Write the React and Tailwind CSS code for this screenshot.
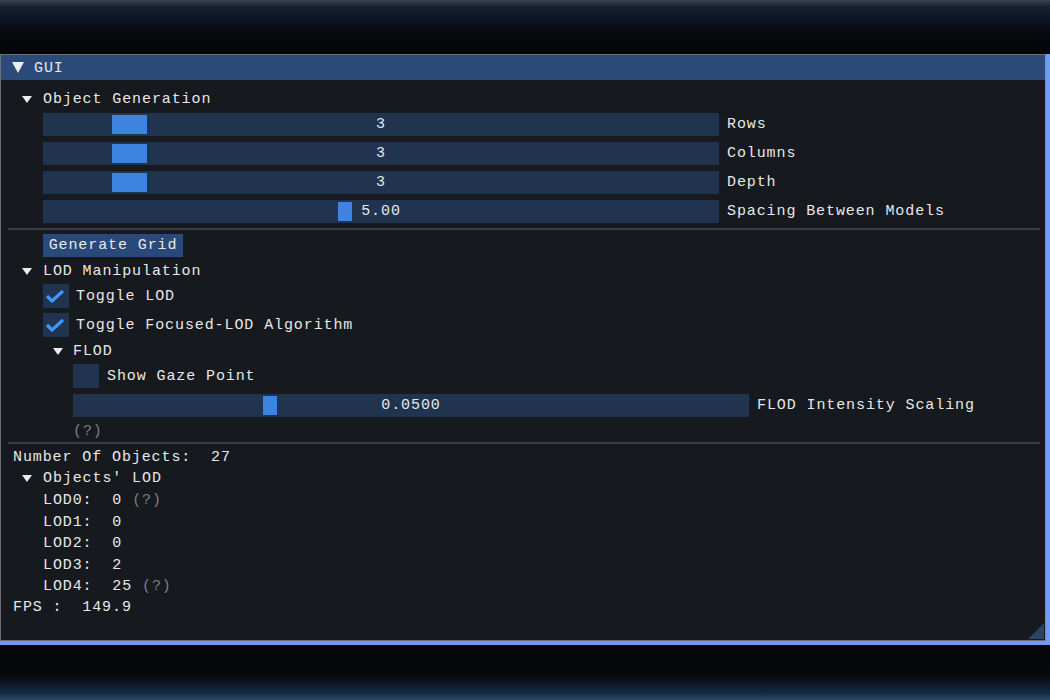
import React from "react";

const font = { fontFamily: '"Liberation Mono", "DejaVu Sans Mono", monospace' };

function Arrow({ size = "sm" }) {
  if (size === "lg") {
    return (
      <svg width="12" height="11" viewBox="0 0 12 11" className="shrink-0">
        <polygon points="0,0 12,0 6,11" fill="#ececec" />
      </svg>
    );
  }
  return (
    <svg width="10" height="7" viewBox="0 0 10 7" className="shrink-0">
      <polygon points="0,0 10,0 5,7" fill="#ececec" />
    </svg>
  );
}

function Tree({ label, arrowX, textX, mt }) {
  return (
    <div className="flex items-center h-[17px]" style={{ marginTop: mt }}>
      <div style={{ width: arrowX - 13 }} className="shrink-0" />
      <Arrow />
      <div style={{ width: textX - arrowX - 10 }} className="shrink-0" />
      <span className="whitespace-pre">{label}</span>
    </div>
  );
}

function Slider({ x, width, grabLeft, grabWidth, value, label, mt }) {
  return (
    <div className="flex items-center h-[23px]" style={{ marginTop: mt }}>
      <div style={{ width: x - 13 }} className="shrink-0" />
      <div
        className="relative h-[23px] bg-[#203450] flex items-center justify-center shrink-0"
        style={{ width }}
      >
        <div
          className="absolute top-[2px] bottom-[2px] bg-[#3d84e0]"
          style={{ left: grabLeft, width: grabWidth }}
        />
        <span className="relative whitespace-pre">{value}</span>
      </div>
      <span className="ml-[8px] whitespace-pre">{label}</span>
    </div>
  );
}

function Check({ x, checked, label, mt, labelGap = 7 }) {
  return (
    <div className="flex items-center h-[24px]" style={{ marginTop: mt }}>
      <div style={{ width: x - 13 }} className="shrink-0" />
      <div className="w-[26px] h-[24px] bg-[#203450] flex items-center justify-center shrink-0">
        {checked && (
          <svg width="20" height="14" viewBox="0 0 20 14" className="-ml-[2px]">
            <polyline
              points="2,7 7,12 18,2"
              fill="none"
              stroke="#4296fa"
              strokeWidth="3.2"
              strokeLinejoin="miter"
            />
          </svg>
        )}
      </div>
      <span className="whitespace-pre" style={{ marginLeft: labelGap }}>
        {label}
      </span>
    </div>
  );
}

function Line({ x, text, mt, extra }) {
  return (
    <div className="flex items-center h-[17px]" style={{ marginTop: mt }}>
      <div style={{ width: x - 13 }} className="shrink-0" />
      <span className="whitespace-pre">{text}</span>
      {extra && <span className="whitespace-pre text-[#7c7f86]">{extra}</span>}
    </div>
  );
}

export default function App() {
  return (
    <div
      className="w-[1050px] h-[700px] flex flex-col bg-[#050608] text-[#e8e8e8] text-[15px] tracking-[0.9px] leading-none overflow-hidden"
      style={font}
    >
      <div className="h-[54px] shrink-0 bg-[linear-gradient(to_bottom,#3a4352_0px,#1a2436_6px,#0d1726_16px,#070b12_32px,#050608_46px,#060708_54px)]" />
      <div className="h-[591px] shrink-0 flex flex-col bg-[#6d9df0] pr-[4px] pb-[4px]">
        <div className="flex-1 flex flex-col border border-[#6b6f78] border-r-[#8a8e96] bg-[#16191e] relative">
          <div className="h-[25px] bg-[#2c4a77] flex items-center shrink-0">
            <div className="w-[11px] shrink-0" />
            <Arrow size="lg" />
            <span className="ml-[10px] mt-[2px]">GUI</span>
          </div>
          <div className="flex flex-col pl-[12px]">
            <Tree label="Object Generation" arrowX={22} textX={43} mt={11} />
            <Slider x={43} width={676} grabLeft={69} grabWidth={35} value="3" label="Rows" mt={5} />
            <Slider x={43} width={676} grabLeft={69} grabWidth={35} value="3" label="Columns" mt={6} />
            <Slider x={43} width={676} grabLeft={69} grabWidth={35} value="3" label="Depth" mt={6} />
            <Slider x={43} width={676} grabLeft={295} grabWidth={14} value="5.00" label="Spacing Between Models" mt={6} />
            <div className="h-[2px] bg-[#3a3d44] mt-[5px] -ml-[5px] mr-[5px]" />
            <div className="flex mt-[4px]">
              <div className="w-[30px] shrink-0" />
              <div className="h-[23px] w-[140px] bg-[#29497a] flex items-center justify-center whitespace-pre">
                Generate Grid
              </div>
            </div>
            <Tree label="LOD Manipulation" arrowX={22} textX={43} mt={6} />
            <Check x={43} checked label="Toggle LOD" mt={4} />
            <Check x={43} checked label="Toggle Focused-LOD Algorithm" mt={5} />
            <Tree label="FLOD" arrowX={53} textX={73} mt={6} />
            <Check x={73} checked={false} label="Show Gaze Point" mt={4} labelGap={8} />
            <Slider x={73} width={676} grabLeft={190} grabWidth={14} value="0.0500" label="FLOD Intensity Scaling" mt={6} />
            <Line x={73} text="" extra="(?)" mt={6} />
            <div className="h-[2px] bg-[#3a3d44] mt-[2px] -ml-[5px] mr-[5px]" />
            <Line x={13} text="Number Of Objects:  27" mt={5} />
            <Tree label="Objects' LOD" arrowX={22} textX={43} mt={4} />
            <Line x={43} text="LOD0:  0 " extra="(?)" mt={5} />
            <Line x={43} text="LOD1:  0" mt={4.5} />
            <Line x={43} text="LOD2:  0" mt={4.5} />
            <Line x={43} text="LOD3:  2" mt={4.5} />
            <Line x={43} text="LOD4:  25 " extra="(?)" mt={4.5} />
            <Line x={13} text="FPS :  149.9" mt={4} />
          </div>
          <svg
            width="16"
            height="16"
            viewBox="0 0 16 16"
            className="absolute right-[1px] bottom-[1px]"
          >
            <polygon points="16,0 16,16 0,16" fill="#2a4468" />
          </svg>
        </div>
      </div>
      <div className="flex-1 bg-[linear-gradient(to_bottom,#050608_0px,#07090d_30px,#152a42_48px,#2a4a6a_55px)]" />
    </div>
  );
}
